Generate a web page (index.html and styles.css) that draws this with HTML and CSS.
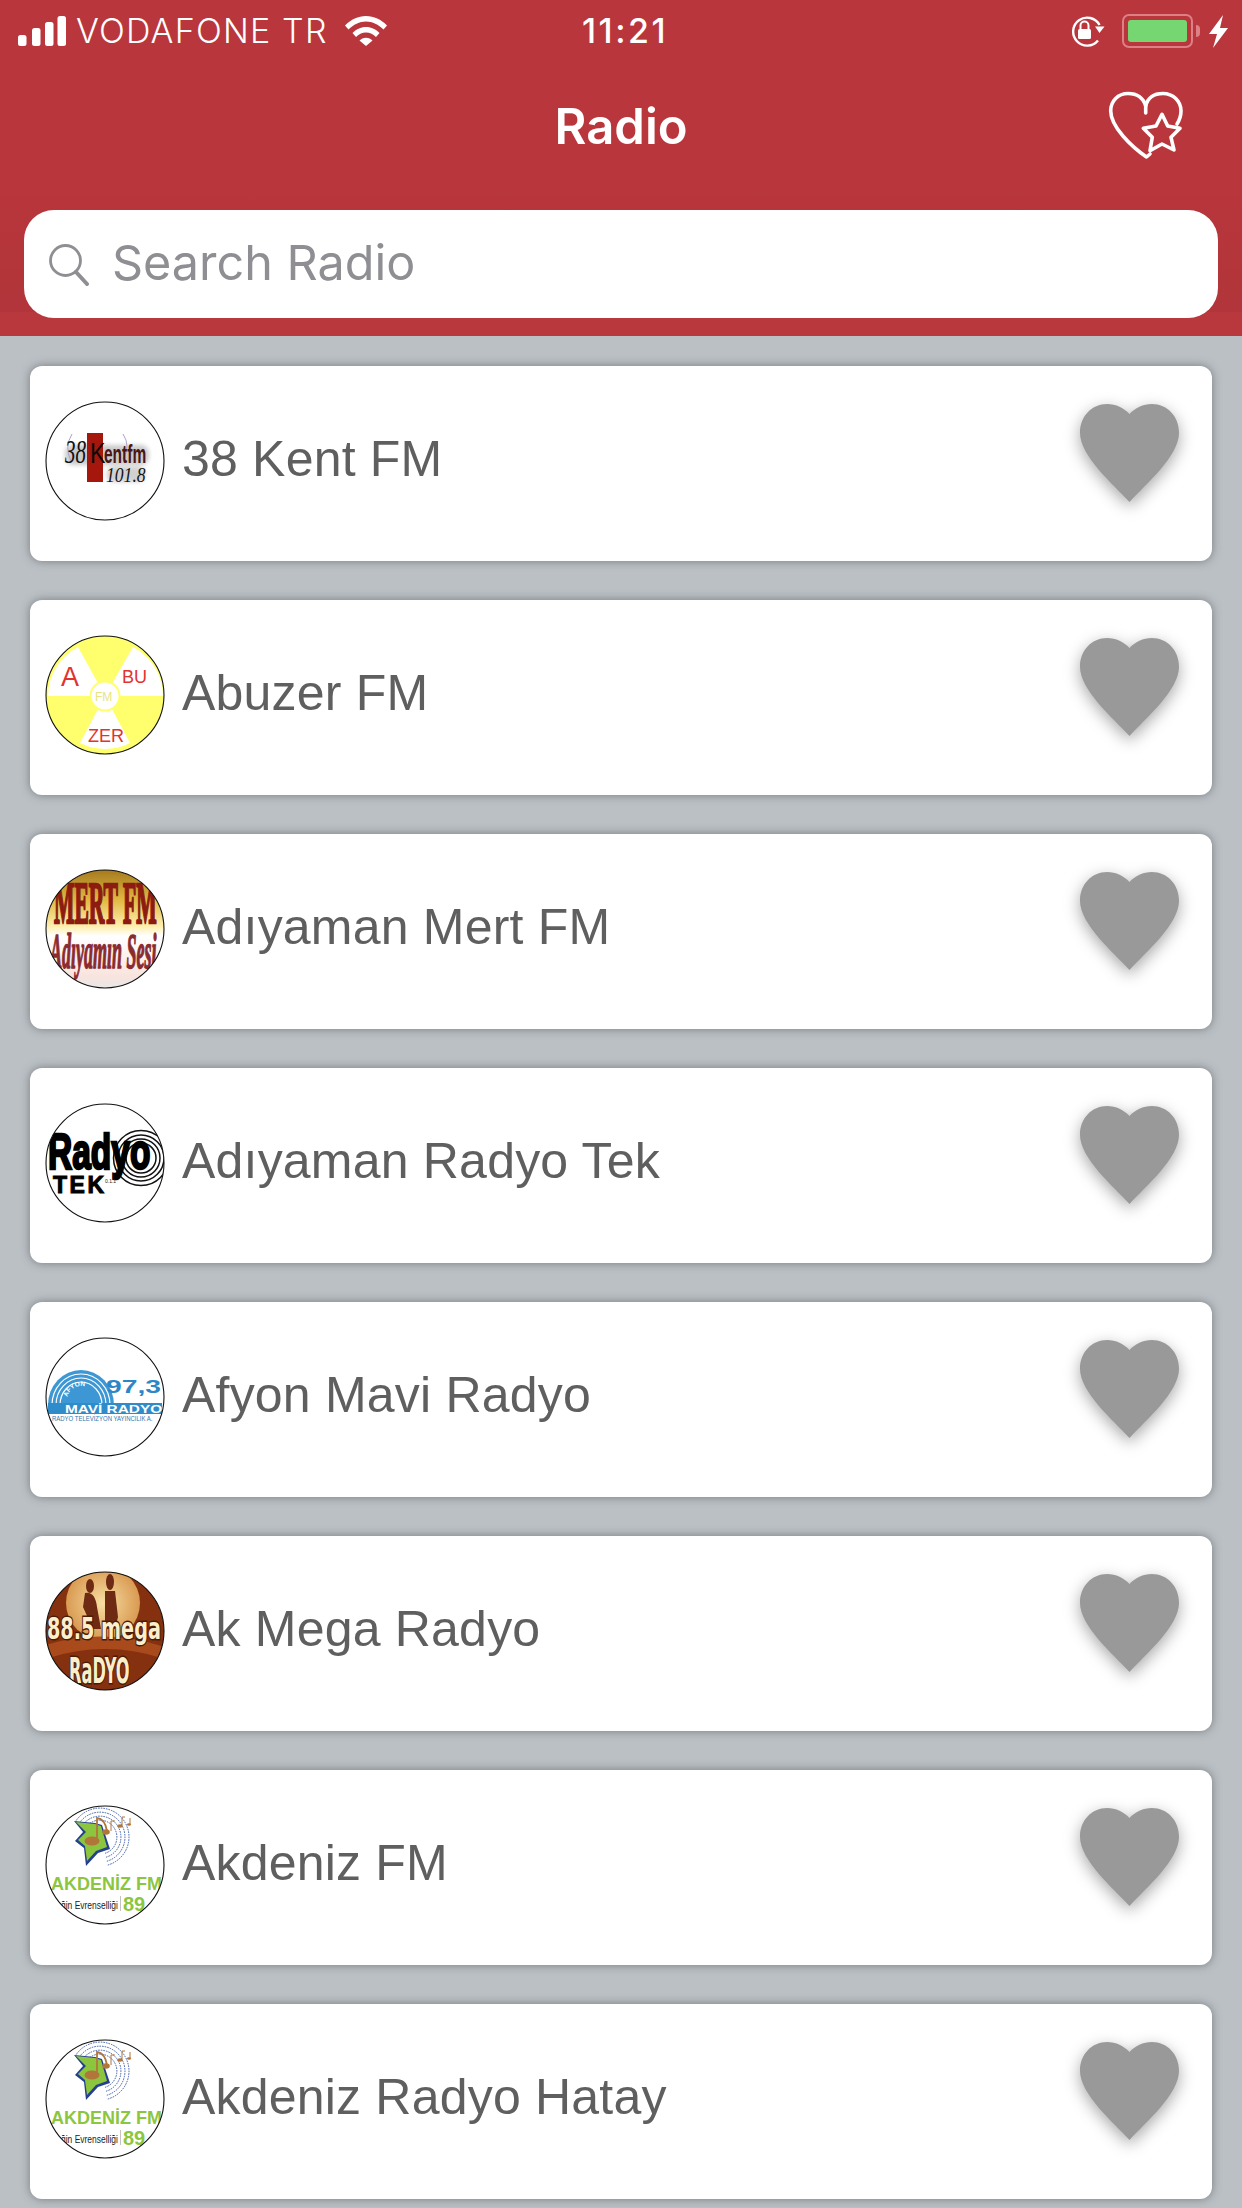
FILE: index.html
```html
<!DOCTYPE html>
<html lang="tr">
<head>
<meta charset="utf-8">
<title>Radio</title>
<link rel="stylesheet" href="styles.css">
</head>
<body>
<svg class="defs" width="0" height="0" aria-hidden="true">
  <defs>
    <clipPath id="round"><circle cx="60" cy="60" r="59"/></clipPath>
    <linearGradient id="mertbg" x1="0" y1="0" x2="0" y2="1">
      <stop offset="0" stop-color="#a67a1e"/>
      <stop offset=".25" stop-color="#e0b840"/>
      <stop offset=".48" stop-color="#fff0b0"/>
      <stop offset=".56" stop-color="#fff"/>
      <stop offset=".9" stop-color="#f8e4de"/>
      <stop offset="1" stop-color="#e8e8e8"/>
    </linearGradient>
    <radialGradient id="megasun" cx=".5" cy=".5" r=".5">
      <stop offset="0" stop-color="#f8dfa4"/>
      <stop offset="1" stop-color="#d99a52"/>
    </radialGradient>
    <filter id="soft"><feGaussianBlur stdDeviation="2"/></filter>
    <symbol id="heart" viewBox="0 0 99 98">
      <path d="M49.5 98C33 80 0 52 0 29C0 12 12 0 27 0C36 0 44 4 49.5 10C55 4 63 0 72 0C87 0 99 12 99 29C99 52 66 80 49.5 98Z"/>
    </symbol>
    <symbol id="akdeniz" viewBox="0 0 120 120">
      <circle cx="60" cy="60" r="59" fill="#fff"/>
      <g clip-path="url(#round)">
        <g fill="none" stroke="#2d4fa0" stroke-width=".9" stroke-dasharray="1.600 1">
          <path d="M31.200 15.500A29 29 0 1 1 62.500 60.100"/>
          <path d="M34.500 17.800A25 25 0 1 1 61.500 56.300"/>
          <path d="M37.800 20A21 21 0 1 1 60.500 52.400"/>
          <path d="M41 22.300A17 17 0 1 1 59.400 48.500"/>
        </g>
        <polygon points="29,16 50,18 57,20 65,44 53,48 41,61 39,43 30,36 38,27" fill="#24408f"/>
        <polygon points="31,17 50,19 56,21 62,42 51,46 42,56 40,41 33,35 41,27" fill="#8cc63f"/>
        <ellipse cx="47" cy="36" rx="7.500" ry="4.500" fill="#b0763a"/>
        <path d="M52 35V13Q60 14 62 26" fill="none" stroke="#b0763a" stroke-width="1.800"/>
        <ellipse cx="61" cy="27" rx="3.800" ry="2.700" fill="#b0763a"/>
        <path d="M66 26V16H70" fill="none" stroke="#b0763a" stroke-width="1"/>
        <ellipse cx="75" cy="21" rx="2.800" ry="1.800" fill="#b0763a"/>
        <path d="M77 20V12H80" fill="none" stroke="#b0763a" stroke-width="1"/>
        <path d="M85 19V13" fill="none" stroke="#b0763a" stroke-width="1"/>
        <ellipse cx="84" cy="19.500" rx="2" ry="1.300" fill="#b0763a"/>
        <text class="logo-sans logo-bold" x="6" y="85" font-size="18" fill="#8cc63f">AKDENİZ FM</text>
        <text class="logo-sans" transform="translate(16 104) scale(.77 1)" font-size="11" fill="#222">ğin Evrenselliği</text>
        <rect x="75" y="91" width=".7" height="15" fill="#aaa"/>
        <text class="logo-sans logo-bold" x="78" y="106" font-size="20" fill="#8cc63f">89</text>
      </g>
    </symbol>
    <path id="afyon-arc" d="M22 63A14 14 0 0 1 50 63"/>
  </defs>
</svg>

<header class="top">
  <div class="status">
    <div class="status-left">
      <svg class="signal" viewBox="0 0 48 30" width="48" height="30" fill="#fff">
        <rect x="0" y="19" width="8.500" height="11" rx="2.500"/>
        <rect x="14" y="12" width="8.500" height="18" rx="2.500"/>
        <rect x="27" y="6" width="8.500" height="24" rx="2.500"/>
        <rect x="39.500" y="0" width="8.500" height="30" rx="2.500"/>
      </svg>
      <span class="carrier">VODAFONE TR</span>
      <svg class="wifi" viewBox="0 0 42 30" width="42" height="30" fill="#fff">
        <path d="M0 9.500C6 3.500 13 0 21 0S36 3.500 42 9.500L38.500 13.500C33.500 8.500 27.500 5.500 21 5.500S8.500 8.500 3.500 13.500Z"/>
        <path d="M7.500 17C11 13.500 15.500 11 21 11S31 13.500 34.500 17L31 21C28.500 18.500 25 16.500 21 16.500S13.500 18.500 11 21Z"/>
        <path d="M14.500 24.500C16 23 18.500 21.800 21 21.800S26 23 27.500 24.500L21 30Z"/>
      </svg>
    </div>
    <span class="time">11:21</span>
    <div class="status-right">
      <svg class="lock" viewBox="0 0 36 32" width="36" height="32">
        <path d="M30.500 10A14 14 0 1 0 29 25.500" fill="none" stroke="#fff" stroke-width="2.400"/>
        <polygon points="26,11.500 35.500,11.500 30.500,18" fill="#fff"/>
        <rect x="9" y="14" width="13" height="10" rx="1.500" fill="#fff"/>
        <path d="M11.500 14V10.500A4 4 0 0 1 19.500 10.500V14" fill="none" stroke="#fff" stroke-width="2"/>
      </svg>
      <div class="battery"><div class="battery-fill"></div></div>
      <div class="battery-nub"></div>
      <svg class="bolt" viewBox="0 0 19 33" width="19" height="33" fill="#fff">
        <polygon points="14,0 0,19 8,19 4,33 19,13 11,13"/>
      </svg>
    </div>
  </div>
  <div class="nav">
    <h1 class="title">Radio</h1>
    <svg class="favs" viewBox="0 0 100 90" width="100" height="90" fill="none" stroke="#fff" stroke-width="3.600" stroke-linecap="round" stroke-linejoin="round">
      <path d="M50.700 33V26C53 17 60 13.500 68 13.500C78 13.500 86 21 86 31C86 36 84.500 40 82 44"/>
      <path d="M50.700 26C48 17 41 13.500 33 13.500C23 13.500 15.700 21 15.700 31C15.700 47 37 67 51.500 77L55 74"/>
      <path d="M67 34.300L72.700 46L85 48.300L76 57.300L79 70L67 64L55 70.700L57.300 57.300L48.300 48.300L61 46Z"/>
    </svg>
  </div>
  <div class="search">
    <svg class="search-icon" viewBox="0 0 44 44" width="44" height="44" fill="none" stroke="#8e8e93" stroke-linecap="round">
      <circle cx="18.500" cy="18.500" r="15" stroke-width="2.800"/>
      <path d="M29 30L40 42" stroke-width="4"/>
    </svg>
    <span class="search-text">Search Radio</span>
  </div>
</header>

<main class="list">
  <article class="card">
    <svg class="logo" viewBox="0 0 120 120">
      <circle cx="60" cy="60" r="59" fill="#fff"/>
      <g clip-path="url(#round)">
        <g filter="url(#soft)" opacity=".3">
          <rect x="20" y="44" width="84" height="20" rx="8" fill="#555"/>
          <rect x="62" y="66" width="38" height="15" rx="6" fill="#666"/>
        </g>
        <path d="M27 33Q19 46 26 60M78 33Q86 45 78 58" fill="none" stroke="#a9a3cc" stroke-width="1"/>
        <rect x="42" y="32" width="16" height="49" fill="#a5160d"/>
        <text class="logo-serif logo-italic" transform="translate(20 62) scale(.62 1)" font-size="34" fill="#111">38</text>
        <text class="logo-sans" transform="translate(45 62) scale(.8 1)" font-size="29" fill="#0b0b0b">K</text>
        <text class="logo-sans logo-bold" transform="translate(59 62) scale(.62 1)" font-size="25" fill="#4a1512">entfm</text>
        <text class="logo-serif logo-italic" transform="translate(61 81) scale(.8 1)" font-size="22" fill="#151515">101.8</text>
      </g>
      <circle cx="60" cy="60" r="59" class="logo-ring"/>
    </svg>
    <span class="name">38 Kent FM</span>
    <svg class="fav"><use href="#heart"/></svg>
  </article>

  <article class="card">
    <svg class="logo" viewBox="0 0 120 120">
      <circle cx="60" cy="60" r="59" fill="#ffff6e"/>
      <g fill="#fff">
        <path d="M60 61L33 12A56 56 0 0 0 3 61Z"/>
        <path d="M60 61L88 12A56 56 0 0 1 118 61Z"/>
        <path d="M60 61L35 108A56 56 0 0 0 85 108Z"/>
      </g>
      <circle cx="60" cy="61" r="15.500" fill="#ffff6e"/>
      <circle cx="60" cy="61" r="13.500" fill="#fff"/>
      <text class="logo-sans" x="16" y="51" font-size="27" fill="#e2332e">A</text>
      <text class="logo-sans" x="77" y="48" font-size="18" fill="#e2332e">BU</text>
      <text class="logo-sans" x="43" y="107" font-size="18" fill="#e2332e">ZER</text>
      <text class="logo-sans" x="50" y="66" font-size="12" fill="#e8e480">FM</text>
      <circle cx="60" cy="60" r="59" class="logo-ring"/>
    </svg>
    <span class="name">Abuzer FM</span>
    <svg class="fav"><use href="#heart"/></svg>
  </article>

  <article class="card">
    <svg class="logo" viewBox="0 0 120 120">
      <circle cx="60" cy="60" r="59" fill="url(#mertbg)"/>
      <g clip-path="url(#round)">
        <text class="logo-serif logo-bold logo-thick-mert" transform="translate(9 54) scale(.36 1)" font-size="60">MERT FM</text>
        <text class="logo-serif logo-bold logo-italic logo-thick-sesi" transform="translate(5 99) scale(.36 1)" font-size="50">Adıyamın Sesi</text>
      </g>
      <circle cx="60" cy="60" r="59" class="logo-ring"/>
    </svg>
    <span class="name">Adıyaman Mert FM</span>
    <svg class="fav"><use href="#heart"/></svg>
  </article>

  <article class="card">
    <svg class="logo" viewBox="0 0 120 120">
      <circle cx="60" cy="60" r="59" fill="#fff"/>
      <g clip-path="url(#round)">
        <g fill="none" stroke="#111" stroke-width="1.500">
          <circle cx="96" cy="55" r="15"/>
          <circle cx="96" cy="55" r="19"/>
          <circle cx="96" cy="55" r="23"/>
          <circle cx="96" cy="55" r="27.500"/>
        </g>
        <text class="logo-sans logo-bold logo-fat" transform="translate(3 66) scale(.67 1)" font-size="50">Radyo</text>
        <text class="logo-sans logo-bold logo-fat-thin" x="8" y="90" font-size="23" letter-spacing="2.500">TEK</text>
        <text class="logo-sans" x="60" y="80" font-size="5" fill="#222">0.1.1</text>
      </g>
      <circle cx="60" cy="60" r="59" class="logo-ring"/>
    </svg>
    <span class="name">Adıyaman Radyo Tek</span>
    <svg class="fav"><use href="#heart"/></svg>
  </article>

  <article class="card">
    <svg class="logo" viewBox="0 0 120 120">
      <circle cx="60" cy="60" r="59" fill="#fff"/>
      <g clip-path="url(#round)">
        <path d="M3 68A33 35 0 0 1 69 68Z" fill="#3d97d4"/>
        <g fill="none" stroke="#fff" stroke-width="1.200">
          <path d="M7 68A29 31 0 0 1 65 68"/>
          <path d="M11 68A25 27 0 0 1 61 68"/>
          <path d="M15 68A21 23 0 0 1 57 68"/>
        </g>
        <text class="logo-sans logo-bold" font-size="6.500" fill="#fff"><textPath href="#afyon-arc" startOffset="3">AFYON</textPath></text>
        <rect x="3" y="66" width="114" height="11" fill="#2f8ccb"/>
        <text class="logo-sans logo-bold" transform="translate(61 56) scale(1.570 1)" font-size="18" fill="#2d86c6">97,3</text>
        <text class="logo-sans logo-bold" transform="translate(20 75.500) scale(1.400 1)" font-size="11" fill="#fff">MAVİ RADYO</text>
        <text class="logo-sans" transform="translate(7 84) scale(.88 1)" font-size="6.800" fill="#2d78b0">RADYO TELEVİZYON YAYINCILIK A.</text>
      </g>
      <circle cx="60" cy="60" r="59" class="logo-ring"/>
    </svg>
    <span class="name">Afyon Mavi Radyo</span>
    <svg class="fav"><use href="#heart"/></svg>
  </article>

  <article class="card">
    <svg class="logo" viewBox="0 0 120 120">
      <circle cx="60" cy="60" r="59" fill="#85300f"/>
      <g clip-path="url(#round)">
        <circle cx="58" cy="32" r="37" fill="url(#megasun)"/>
        <path d="M0 74Q60 56 120 76V88Q60 68 0 88Z" fill="#a84a1c"/>
        <g fill="#6e2a12">
          <ellipse cx="45" cy="15" rx="4" ry="7"/>
          <ellipse cx="65" cy="11" rx="4" ry="8"/>
          <path d="M40 22Q50 20 52 36L56 58H48L38 36Z"/>
          <path d="M60 20H70L73 46L70 58H60Z"/>
        </g>
        <g class="logo-mega">
          <text transform="translate(2 68) scale(.62 1)" font-size="31">88.5 mega</text>
          <text transform="translate(24 112) scale(.45 1)" font-size="36">RaDYO</text>
        </g>
      </g>
      <circle cx="60" cy="60" r="59" class="logo-ring"/>
    </svg>
    <span class="name">Ak Mega Radyo</span>
    <svg class="fav"><use href="#heart"/></svg>
  </article>

  <article class="card">
    <svg class="logo"><use href="#akdeniz"/><circle cx="60" cy="60" r="59" class="logo-ring"/></svg>
    <span class="name">Akdeniz FM</span>
    <svg class="fav"><use href="#heart"/></svg>
  </article>

  <article class="card">
    <svg class="logo"><use href="#akdeniz"/><circle cx="60" cy="60" r="59" class="logo-ring"/></svg>
    <span class="name">Akdeniz Radyo Hatay</span>
    <svg class="fav"><use href="#heart"/></svg>
  </article>
</main>
</body>
</html>
```

FILE: styles.css
```css
html, body {
  margin: 0;
  padding: 0;
}

body {
  width: 1242px;
  height: 2208px;
  overflow: hidden;
  background: #bbc0c5;
  font-family: "Liberation Sans", Arial, sans-serif;
}

.defs {
  position: absolute;
}

.top {
  height: 336px;
  box-sizing: border-box;
  padding-top: 14px;
  background: linear-gradient(to bottom, #b9363c 0, #b9363c 170px, #b1353a 312px, #b9383d 312px, #b9383d 336px);
  color: #fff;
}

.status {
  display: grid;
  grid-template-columns: 1fr auto 1fr;
  align-items: center;
  height: 34px;
  padding: 0 14px 0 18px;
}

.status-left,
.status-right {
  display: flex;
  align-items: center;
}

.status-right {
  justify-content: flex-end;
}

.carrier {
  margin-left: 10px;
  font-family: Inter, sans-serif;
  font-size: 34px;
  font-weight: 300;
  line-height: 34px;
  letter-spacing: 1.2px;
}

.wifi {
  margin-left: 17px;
}

.time {
  padding-left: 4px;
  font-family: Inter, sans-serif;
  font-size: 34px;
  font-weight: 500;
  line-height: 34px;
  letter-spacing: 2.5px;
}

.lock {
  margin-right: 17px;
}

.battery {
  box-sizing: border-box;
  width: 71px;
  height: 34px;
  padding: 4px;
  border: 2px solid #dd7f85;
  border-radius: 7px;
}

.battery-fill {
  height: 100%;
  background: #76d672;
  border-radius: 3px;
}

.battery-nub {
  width: 4px;
  height: 12px;
  margin: 0 9px 0 3px;
  background: #dd7f85;
  border-radius: 0 4px 4px 0;
}

.nav {
  display: grid;
  grid-template-columns: 1fr auto 1fr;
  align-items: center;
  height: 90px;
  margin-top: 32px;
}

.title {
  grid-column: 2;
  margin: 0;
  padding-top: 4px;
  font-family: Inter, sans-serif;
  font-size: 49px;
  font-weight: 600;
  line-height: 60px;
}

.favs {
  justify-self: end;
  margin-right: 47px;
}

.search {
  display: flex;
  align-items: center;
  box-sizing: border-box;
  height: 108px;
  margin: 40px 24px 0;
  padding-left: 23px;
  background: #fff;
  border-radius: 30px;
}

.search-text {
  margin-left: 21px;
  margin-bottom: 2px;
  color: #8e8e93;
  font-family: Inter, sans-serif;
  font-size: 48.500px;
  line-height: 60px;
}

.list {
  display: flex;
  flex-direction: column;
  gap: 39px;
  padding: 30px 30px 0;
}

.card {
  display: flex;
  align-items: flex-start;
  flex: none;
  box-sizing: border-box;
  height: 195px;
  padding: 35px 33px 0 15px;
  background: #fff;
  border-radius: 12px;
  box-shadow: 0 0 10px rgba(60, 65, 70, 0.55);
}

.logo {
  flex: none;
  width: 120px;
  height: 120px;
}

.logo-ring {
  fill: none;
  stroke: #111;
  stroke-width: 1.100;
}

.logo-sans {
  font-family: "Liberation Sans", sans-serif;
}

.logo-serif {
  font-family: "Liberation Serif", serif;
}

.logo-bold {
  font-weight: 700;
}

.logo-italic {
  font-style: italic;
}

.logo-thick-mert {
  fill: #8c1c10;
  stroke: #8c1c10;
  stroke-width: 2.500;
}

.logo-thick-sesi {
  fill: #8a2b30;
  stroke: #8a2b30;
  stroke-width: 1.500;
}

.logo-fat {
  fill: #000;
  stroke: #000;
  stroke-width: 2.500;
}

.logo-fat-thin {
  fill: #000;
  stroke: #000;
  stroke-width: 1;
}

.logo-mega {
  font-family: "DejaVu Sans", sans-serif;
  font-weight: 700;
  fill: #fbeecb;
  stroke: #4a1c08;
  stroke-width: 3;
  paint-order: stroke;
}

.name {
  flex: 1;
  margin: 28px 0 0 17px;
  color: #5f5f5f;
  font-size: 50px;
  line-height: 60px;
  letter-spacing: 0.2px;
}

.fav {
  flex: none;
  width: 99px;
  height: 98px;
  margin-top: 3px;
  fill: #999;
  filter: drop-shadow(0 5px 8px rgba(0, 0, 0, 0.34));
}
```
